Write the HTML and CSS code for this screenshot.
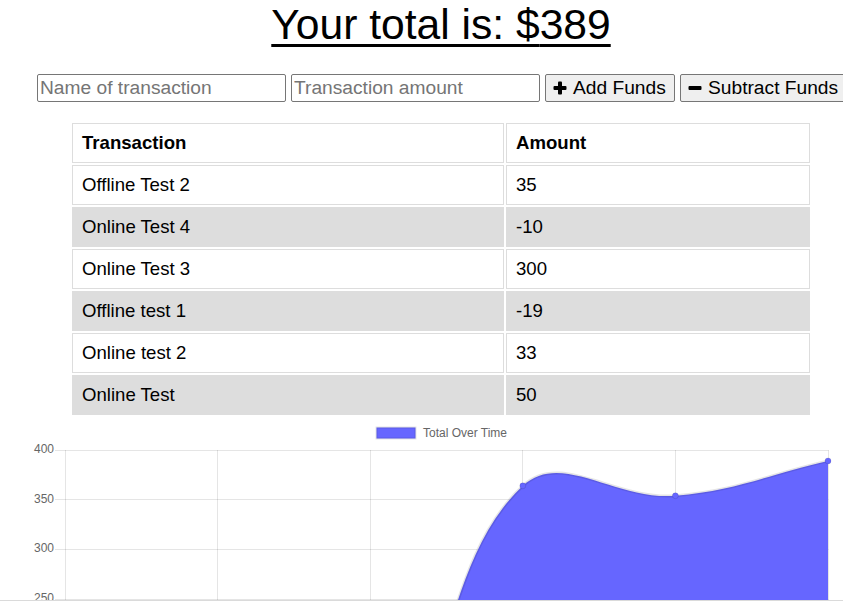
FILE: index.html
```
<!DOCTYPE html>
<html lang="en">
<head>
<meta charset="utf-8">
<title>Budget Tracker</title>
<link rel="stylesheet" href="styles.css">
</head>
<body>
<div class="page">
  <h1 class="total">Your total is: $<span class="total-value">389</span></h1>

  <div class="form-row">
    <input type="text" class="field" placeholder="Name of transaction">
    <input type="text" class="field" placeholder="Transaction amount">
    <button class="btn btn-add" type="button">
      <svg class="icon" viewBox="0 0 14 14" aria-hidden="true"><rect x="5" y="0.5" width="4" height="13" rx="1"/><rect x="0.5" y="5" width="13" height="4" rx="1"/></svg>
      Add Funds
    </button>
    <button class="btn btn-sub" type="button">
      <svg class="icon" viewBox="0 0 14 14" aria-hidden="true"><rect x="0.5" y="5" width="13" height="4" rx="1"/></svg>
      Subtract Funds
    </button>
  </div>

  <table class="tx-table">
    <thead>
      <tr><th class="col-name">Transaction</th><th class="col-amt">Amount</th></tr>
    </thead>
    <tbody>
      <tr><td>Offline Test 2</td><td>35</td></tr>
      <tr class="alt"><td>Online Test 4</td><td>-10</td></tr>
      <tr><td>Online Test 3</td><td>300</td></tr>
      <tr class="alt"><td>Offline test 1</td><td>-19</td></tr>
      <tr><td>Online test 2</td><td>33</td></tr>
      <tr class="alt"><td>Online Test</td><td>50</td></tr>
    </tbody>
  </table>

  <svg class="chart" width="882" height="183" viewBox="0 420 882 183">
    <g class="legend">
      <rect class="legend-box" x="376.5" y="426.5" width="39" height="11"/>
      <text class="legend-text" x="423" y="435.5">Total Over Time</text>
    </g>
    <g class="grid">
      <line x1="55" y1="449.5" x2="828.5" y2="449.5"/>
      <line x1="55" y1="498.5" x2="828.5" y2="498.5"/>
      <line x1="55" y1="548.5" x2="828.5" y2="548.5"/>
      <line x1="55" y1="598.5" x2="828.5" y2="598.5"/>
      <line x1="65.5" y1="449" x2="65.5" y2="603"/>
      <line x1="217.5" y1="449" x2="217.5" y2="603"/>
      <line x1="370.5" y1="449" x2="370.5" y2="603"/>
      <line x1="522.5" y1="449" x2="522.5" y2="603"/>
      <line x1="675.5" y1="449" x2="675.5" y2="603"/>
      <line x1="828.5" y1="449" x2="828.5" y2="603"/>
    </g>
    <g class="y-labels">
      <text x="54" y="452">400</text>
      <text x="54" y="502">350</text>
      <text x="54" y="551">300</text>
      <text x="54" y="601">250</text>
    </g>
    <path class="area" d="M65,796.9 C126.04,783.78 156.1,766.9 217.6,764.1 C278.18,761.34 331.81,796.9 370.2,783 C453.89,706.42 438.99,563.97 522.8,484.8 C561.07,449 615.06,499.62 675.4,494.7 C737.14,489.66 766.96,473.82 828,459.9 L828,796.9 L65,796.9 Z"/>
    <path class="line" d="M65,796.9 C126.04,783.78 156.1,766.9 217.6,764.1 C278.18,761.34 331.81,796.9 370.2,783 C453.89,706.42 438.99,563.97 522.8,484.8 C561.07,449 615.06,499.62 675.4,494.7 C737.14,489.66 766.96,473.82 828,459.9"/>
    <g class="points">
      <circle cx="522.8" cy="484.8" r="3"/>
      <circle cx="675.4" cy="494.7" r="3"/>
      <circle cx="828" cy="459.9" r="3"/>
    </g>
  </svg>
</div>
<div class="viewport-edge"></div>
</body>
</html>
```

FILE: styles.css
```
html {
  overflow: hidden;
}

body {
  margin: 0;
  background: #fff;
  color: #000;
  font-family: "Liberation Sans", Arial, Helvetica, sans-serif;
}

.page {
  width: 882px;
}

.total {
  margin: 0;
  font-size: 42.6px;
  font-weight: normal;
  line-height: 48px;
  text-align: center;
  text-decoration: underline;
  text-decoration-thickness: 3px;
  text-underline-offset: 5px;
}

.form-row {
  display: flex;
  justify-content: center;
  gap: 5px;
  margin-top: 26px;
}

.field {
  box-sizing: border-box;
  width: 249px;
  height: 28px;
  margin: 0;
  padding: 1px 2px;
  border: 1px solid #767676;
  border-radius: 2px;
  font-family: "Liberation Sans", Arial, sans-serif;
  font-size: 19.2px;
  color: #000;
  background: #fff;
}

.field::placeholder {
  color: #757575;
}

.btn {
  box-sizing: border-box;
  display: flex;
  align-items: center;
  gap: 6px;
  height: 28px;
  margin: 0;
  padding: 0 6px 0 7px;
  border: 1px solid #767676;
  border-radius: 2px;
  background: #efefef;
  color: #000;
  font-family: "Liberation Sans", Arial, sans-serif;
  font-size: 19.2px;
  white-space: nowrap;
}

.btn-add {
  width: 130px;
}

.btn-sub {
  width: 165px;
}

.icon {
  width: 14px;
  height: 14px;
  fill: #000;
  flex: none;
}

.tx-table {
  box-sizing: border-box;
  width: 742px;
  margin: 19px auto 0;
  border-collapse: separate;
  border-spacing: 2px;
  table-layout: fixed;
  font-size: 18.6px;
}

.tx-table th,
.tx-table td {
  box-sizing: border-box;
  height: 40px;
  padding: 0 9px;
  border: 1px solid #dddddd;
  line-height: 38px;
  text-align: left;
  white-space: nowrap;
}

.tx-table th {
  font-weight: bold;
}

.col-name {
  width: 432px;
}

.col-amt {
  width: 304px;
}

.tx-table tr.alt td {
  background: #dddddd;
}

.chart {
  display: block;
  margin-top: 4px;
  overflow: hidden;
}

.legend-box {
  fill: #6666ff;
  stroke: rgba(0, 0, 0, 0.1);
  stroke-width: 2;
}

.legend-text,
.y-labels text {
  font-family: "Liberation Sans", Arial, sans-serif;
  font-size: 12px;
  fill: #666666;
}

.y-labels text {
  text-anchor: end;
}

.grid line {
  stroke: rgba(0, 0, 0, 0.1);
  stroke-width: 1;
}

.area {
  fill: #6666ff;
}

.line {
  fill: none;
  stroke: rgba(0, 0, 0, 0.1);
  stroke-width: 3;
}

.points circle {
  fill: #6666ff;
  stroke: rgba(0, 0, 0, 0.1);
  stroke-width: 1;
}

.viewport-edge {
  position: fixed;
  left: 0;
  right: 0;
  bottom: 0;
  height: 7px;
  box-sizing: border-box;
  background: #fff;
  border-top: 1px solid #dadada;
}
```
